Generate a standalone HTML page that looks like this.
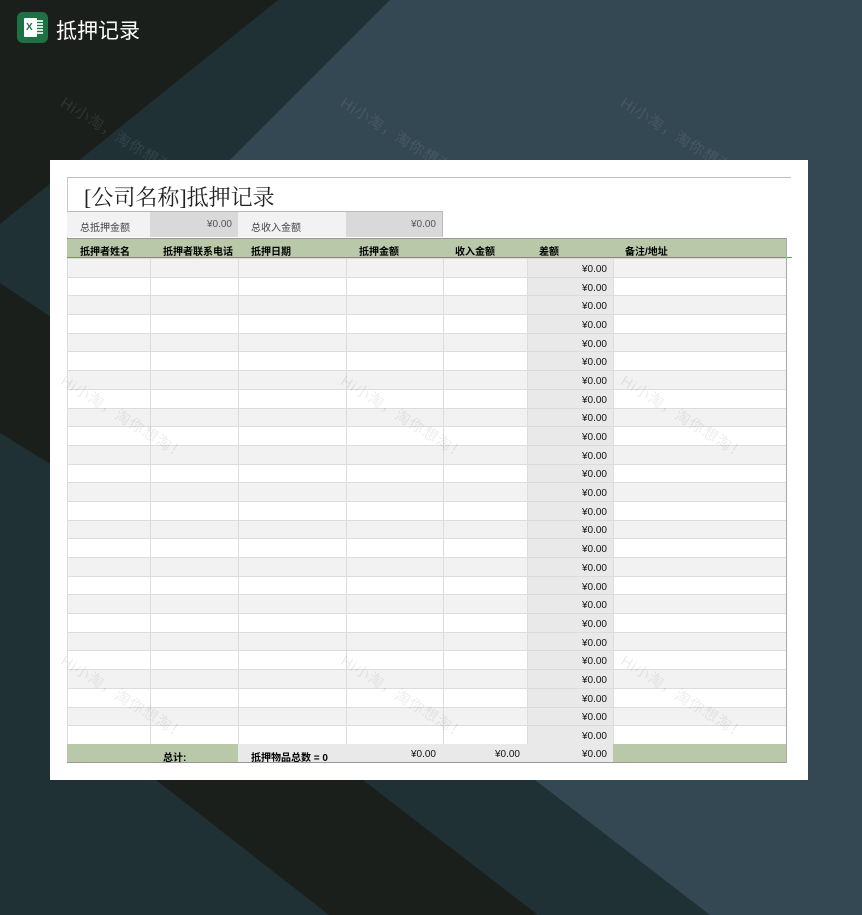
<!DOCTYPE html>
<html><head><meta charset="utf-8">
<style>
*{margin:0;padding:0;box-sizing:border-box}
body{width:862px;height:915px;overflow:hidden;position:relative;background:#1f3135;font-family:"Liberation Sans","Noto Sans CJK SC",sans-serif}
svg.bg{position:absolute;left:0;top:0}
.card{position:absolute;left:50px;top:160px;width:758px;height:620px;background:#fff}
.wm{position:absolute;color:rgba(255,255,255,.09);font-size:15px;transform:rotate(32deg);transform-origin:0 0;white-space:nowrap;letter-spacing:1px;z-index:5}
.wmc{color:rgba(0,0,0,.07)}
.a{position:absolute}
table{position:absolute;left:17px;border-collapse:collapse;table-layout:fixed;font-size:10px}
td{border:1px solid #dcdcdc;height:18.7px;padding:0 3px;overflow:hidden;white-space:nowrap}
tr:nth-child(odd) td{background:#f2f2f2}
tr:nth-child(even) td{background:#fff}
td.d{background:#e9e9e9!important;text-align:right;font-size:10px;color:#111;padding-right:6px;padding-top:3px}
.n{font-size:10px;color:#111;text-align:right}
</style></head><body>
<svg class="bg" width="862" height="915">
<polygon points="0,0 278,0 0,224" fill="#1b1f1b"/>
<polygon points="390,0 862,0 862,915 710,915 535,780 300,500 60,330" fill="#344853"/>
<polygon points="0,283 60,323 60,470 0,433" fill="#1b1f1b"/>
<polygon points="156,780 363,780 538,915 329,915" fill="#1b1f1b"/>
</svg>
<div class="a" style="left:17px;top:12px;width:31px;height:31px;background:#1e7145;border-radius:6px"></div>
<div class="a" style="left:24px;top:18px;width:13px;height:19px;background:#fff;border-radius:1px"></div>
<div class="a" style="left:26px;top:22px;color:#1e7145;font-size:10px;font-weight:bold">X</div>
<div class="a" style="left:37px;top:20px;width:6px;height:15px;background:repeating-linear-gradient(#cfe8d9 0 2px,#1e7145 2px 3px)"></div>
<div class="a" style="left:56px;top:15px;color:#fff;font-size:21px">抵押记录</div>

<div class="card">
 <div class="a" style="left:17px;top:17px;width:724px;height:1px;background:#c0c0c0"></div>
 <div class="a" style="left:17px;top:17px;width:1px;height:585px;background:#c8c8c8"></div>
 <div class="a" style="left:34px;top:21px;font-size:22px;color:#222;font-family:'Liberation Serif','Noto Serif CJK SC',serif">[公司名称]抵押记录</div>
 <div class="a" style="left:17px;top:52px;width:83px;height:25px;background:#f2f2f2;font-size:10px;color:#444;padding:7px 0 0 13px">总抵押金额</div>
 <div class="a" style="left:100px;top:52px;width:88px;height:25px;background:#d9d9d9;font-size:10px;color:#555;text-align:right;padding:7px 6px 0 0">¥0.00</div>
 <div class="a" style="left:188px;top:52px;width:108px;height:25px;background:#f2f2f2;font-size:10px;color:#444;padding:7px 0 0 13px">总收入金额</div>
 <div class="a" style="left:296px;top:52px;width:97px;height:25px;background:#d9d9d9;font-size:10px;color:#555;text-align:right;padding:7px 6px 0 0;border-right:1px solid #bbb">¥0.00</div>
 <div class="a" style="left:17px;top:51px;width:376px;height:1px;background:#bbb"></div>
 <div class="a" style="left:17px;top:78px;width:719px;height:19px;background:#b8c8a8;border-top:1px solid #999"></div>
 <div class="a" style="left:17px;top:97px;width:725px;height:1px;background:#5aa55a"></div>
 <div class="a" style="left:30px;top:83px;font-size:10px;font-weight:bold">抵押者姓名</div>
 <div class="a" style="left:113px;top:83px;font-size:10px;font-weight:bold">抵押者联系电话</div>
 <div class="a" style="left:201px;top:83px;font-size:10px;font-weight:bold">抵押日期</div>
 <div class="a" style="left:309px;top:83px;font-size:10px;font-weight:bold">抵押金额</div>
 <div class="a" style="left:405px;top:83px;font-size:10px;font-weight:bold">收入金额</div>
 <div class="a" style="left:489px;top:83px;font-size:10px;font-weight:bold">差额</div>
 <div class="a" style="left:575px;top:83px;font-size:10px;font-weight:bold">备注/地址</div>
 <table style="top:98px;width:719px">
 <colgroup><col style="width:83px"><col style="width:88px"><col style="width:108px"><col style="width:97px"><col style="width:84px"><col style="width:86px"><col style="width:173px"></colgroup>
 <tr><td></td><td></td><td></td><td></td><td></td><td class="d">¥0.00</td><td></td></tr>
 <tr><td></td><td></td><td></td><td></td><td></td><td class="d">¥0.00</td><td></td></tr>
 <tr><td></td><td></td><td></td><td></td><td></td><td class="d">¥0.00</td><td></td></tr>
 <tr><td></td><td></td><td></td><td></td><td></td><td class="d">¥0.00</td><td></td></tr>
 <tr><td></td><td></td><td></td><td></td><td></td><td class="d">¥0.00</td><td></td></tr>
 <tr><td></td><td></td><td></td><td></td><td></td><td class="d">¥0.00</td><td></td></tr>
 <tr><td></td><td></td><td></td><td></td><td></td><td class="d">¥0.00</td><td></td></tr>
 <tr><td></td><td></td><td></td><td></td><td></td><td class="d">¥0.00</td><td></td></tr>
 <tr><td></td><td></td><td></td><td></td><td></td><td class="d">¥0.00</td><td></td></tr>
 <tr><td></td><td></td><td></td><td></td><td></td><td class="d">¥0.00</td><td></td></tr>
 <tr><td></td><td></td><td></td><td></td><td></td><td class="d">¥0.00</td><td></td></tr>
 <tr><td></td><td></td><td></td><td></td><td></td><td class="d">¥0.00</td><td></td></tr>
 <tr><td></td><td></td><td></td><td></td><td></td><td class="d">¥0.00</td><td></td></tr>
 <tr><td></td><td></td><td></td><td></td><td></td><td class="d">¥0.00</td><td></td></tr>
 <tr><td></td><td></td><td></td><td></td><td></td><td class="d">¥0.00</td><td></td></tr>
 <tr><td></td><td></td><td></td><td></td><td></td><td class="d">¥0.00</td><td></td></tr>
 <tr><td></td><td></td><td></td><td></td><td></td><td class="d">¥0.00</td><td></td></tr>
 <tr><td></td><td></td><td></td><td></td><td></td><td class="d">¥0.00</td><td></td></tr>
 <tr><td></td><td></td><td></td><td></td><td></td><td class="d">¥0.00</td><td></td></tr>
 <tr><td></td><td></td><td></td><td></td><td></td><td class="d">¥0.00</td><td></td></tr>
 <tr><td></td><td></td><td></td><td></td><td></td><td class="d">¥0.00</td><td></td></tr>
 <tr><td></td><td></td><td></td><td></td><td></td><td class="d">¥0.00</td><td></td></tr>
 <tr><td></td><td></td><td></td><td></td><td></td><td class="d">¥0.00</td><td></td></tr>
 <tr><td></td><td></td><td></td><td></td><td></td><td class="d">¥0.00</td><td></td></tr>
 <tr><td></td><td></td><td></td><td></td><td></td><td class="d">¥0.00</td><td></td></tr>
 <tr><td></td><td></td><td></td><td></td><td></td><td class="d">¥0.00</td><td></td></tr>
 </table>
 <div class="a" style="left:17px;top:584px;width:171px;height:18px;background:#b8c8a8"></div>
 <div class="a" style="left:113px;top:589px;font-size:10px;font-weight:bold">总计:</div>
 <div class="a" style="left:188px;top:584px;width:375px;height:18px;background:#e9e9e9"></div>
 <div class="a" style="left:201px;top:589px;font-size:10px;font-weight:bold">抵押物品总数 = 0</div>
 <div class="a n" style="left:296px;top:589px;width:90px">¥0.00</div>
 <div class="a n" style="left:393px;top:589px;width:77px">¥0.00</div>
 <div class="a n" style="left:477px;top:589px;width:80px">¥0.00</div>
 <div class="a" style="left:563px;top:584px;width:173px;height:18px;background:#b8c8a8"></div>
 <div class="a" style="left:17px;top:602px;width:719px;height:1px;background:#999"></div>
 <div class="a" style="left:736px;top:78px;width:1px;height:525px;background:#aaa"></div>
</div>

<div class="wm" style="left:68px;top:92px">Hi小淘，淘你想淘！</div>
<div class="wm" style="left:348px;top:92px">Hi小淘，淘你想淘！</div>
<div class="wm" style="left:628px;top:92px">Hi小淘，淘你想淘！</div>
<div class="wm wmc" style="left:68px;top:370px">Hi小淘，淘你想淘！</div>
<div class="wm wmc" style="left:348px;top:370px">Hi小淘，淘你想淘！</div>
<div class="wm wmc" style="left:628px;top:370px">Hi小淘，淘你想淘！</div>
<div class="wm wmc" style="left:68px;top:650px">Hi小淘，淘你想淘！</div>
<div class="wm wmc" style="left:348px;top:650px">Hi小淘，淘你想淘！</div>
<div class="wm wmc" style="left:628px;top:650px">Hi小淘，淘你想淘！</div>
</body></html>
